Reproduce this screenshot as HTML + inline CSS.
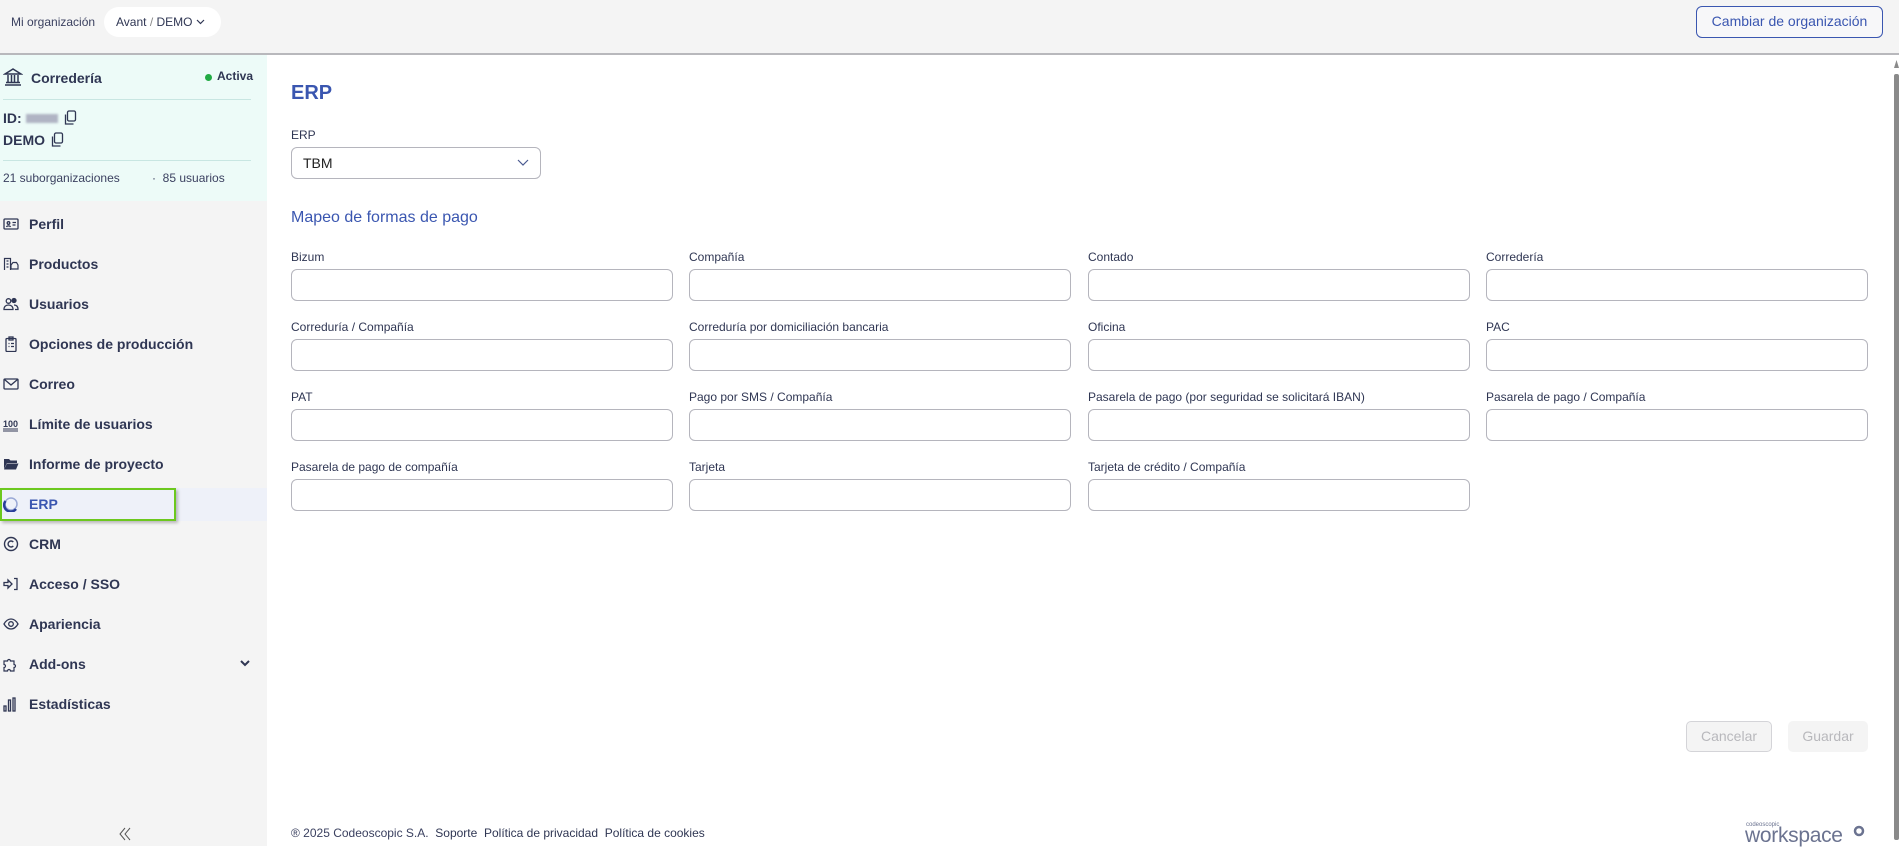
<!DOCTYPE html>
<html><head><meta charset="utf-8"><style>
*{box-sizing:border-box;margin:0;padding:0}
body{width:1899px;height:846px;overflow:hidden;font-family:"Liberation Sans",Arial,sans-serif;color:#2f3653;background:#fff;position:relative}
.hdr{position:absolute;left:0;top:0;width:1899px;height:55px;background:#f4f4f4;border-bottom:2px solid #b8b8bc}
.abs{position:absolute}
.side{position:absolute;left:0;top:55px;width:267px;height:791px;background:#f4f4f4}
.info{position:absolute;left:0;top:0;width:267px;height:146px;background:#edfbf8}
.nav{position:absolute;left:0;width:267px;height:32px;font-size:14px;font-weight:bold;line-height:32px;padding-left:29px}
.nav svg{position:absolute;left:3px;top:8px}
.lbl{position:absolute;font-size:12px;color:#2f3653}
.inp{position:absolute;width:382px;height:32px;border:1px solid #b5b5bd;border-radius:6px;background:#fff}
a{color:#2f3653}
</style></head><body>
<div class="hdr">
 <div class="abs" style="left:11px;top:15px;font-size:12px;color:#3b4160">Mi organización</div>
 <div class="abs" style="left:104px;top:7px;width:117px;height:30px;background:#fff;border-radius:15px;font-size:12px;line-height:30px;padding-left:12px">Avant <span style="color:#888">/</span> DEMO <svg width="9" height="6" viewBox="0 0 9 6" style="vertical-align:1px"><path d="M1 1l3.5 3.5L8 1" stroke="#2f3653" fill="none" stroke-width="1.2"/></svg></div>
 <div class="abs" style="left:1696px;top:6px;width:187px;height:32px;border:1.5px solid #3a56b0;border-radius:6px;background:#f7f7f9;color:#3a56b0;font-size:14px;line-height:29px;text-align:center">Cambiar de organización</div>
</div>
<div class="side">
 <div class="info">
  <svg class="abs" style="left:3px;top:12px" width="20" height="20" viewBox="0 0 20 20" fill="none" stroke="#2f3653" stroke-width="1.5"><path d="M2 7L10 2l8 5zM2 18h16M3 15.5h14M5 8v7M8.5 8v7M11.5 8v7M15 8v7"/></svg>
  <div class="abs" style="left:31px;top:15px;font-size:14px;font-weight:bold">Corredería</div>
  <div class="abs" style="left:205px;top:19px;width:7px;height:7px;border-radius:50%;background:#22aa44"></div>
  <div class="abs" style="left:217px;top:14px;font-size:12px;font-weight:bold">Activa</div>
  <div class="abs" style="left:3px;top:44px;width:248px;height:1px;background:#c8e6e2"></div>
  <div class="abs" style="left:3px;top:55px;font-size:14px;font-weight:bold">ID: <span style="display:inline-block;width:32px;height:9px;background:#b0b4c4;filter:blur(1px);vertical-align:0"></span></div>
  <svg class="abs" style="left:63px;top:55px" width="14" height="16" viewBox="0 0 14 16" fill="none" stroke="#2f3653" stroke-width="1.3"><rect x="4.5" y="1" width="8" height="10" rx="1.5"/><path d="M2.5 4.5v9.5h8"/></svg>
  <div class="abs" style="left:3px;top:77px;font-size:14px;font-weight:bold">DEMO</div>
  <svg class="abs" style="left:50px;top:77px" width="14" height="16" viewBox="0 0 14 16" fill="none" stroke="#2f3653" stroke-width="1.3"><rect x="4.5" y="1" width="8" height="10" rx="1.5"/><path d="M2.5 4.5v9.5h8"/></svg>
  <div class="abs" style="left:3px;top:105px;width:248px;height:1px;background:#c8e6e2"></div>
  <div class="abs" style="left:3px;top:116px;font-size:12px;color:#3b4160">21 suborganizaciones</div>
  <div class="abs" style="left:152px;top:116px;font-size:12px;color:#3b4160">· &nbsp;85 usuarios</div>
 </div>
</div>
<div class="nav" style="top:208px">Perfil<svg width="16" height="16" viewBox="0 0 16 16" fill="none" stroke="#2f3653" stroke-width="1.3"><rect x="1" y="3" width="14" height="10" rx="1"/><circle cx="5.5" cy="7" r="1.3"/><path d="M3.5 11c.5-1.5 3.5-1.5 4 0M9.5 6.5h3.5M9.5 9h3"/></svg></div>
<div class="nav" style="top:248px">Productos<svg width="16" height="16" viewBox="0 0 16 16" fill="none" stroke="#2f3653" stroke-width="1.2"><path d="M1.5 14V2.5h6V14M3.5 5h2M3.5 8h2M3.5 11h2M8 9l2-2.5h3.5L15 9v4H8z"/></svg></div>
<div class="nav" style="top:288px">Usuarios<svg width="16" height="16" viewBox="0 0 16 16" fill="none" stroke="#2f3653" stroke-width="1.3"><circle cx="5.5" cy="5" r="2.3"/><path d="M1 13.5c0-3 2-4.5 4.5-4.5s4.5 1.5 4.5 4.5z"/><circle cx="11" cy="4.5" r="2" fill="#2f3653"/><path d="M11 9c2 0 4 1 4 4.5h-3"/></svg></div>
<div class="nav" style="top:328px">Opciones de producción<svg width="16" height="16" viewBox="0 0 16 16" fill="none" stroke="#2f3653" stroke-width="1.3"><rect x="3" y="2.5" width="10" height="13" rx="1"/><rect x="6" y="1" width="4" height="3"/><path d="M5.5 7.5h1M8 7.5h3M5.5 10.5h1M8 10.5h3"/></svg></div>
<div class="nav" style="top:368px">Correo<svg width="16" height="16" viewBox="0 0 16 16" fill="none" stroke="#2f3653" stroke-width="1.3"><rect x="1" y="3" width="14" height="10" rx="1"/><path d="M1.5 3.5L8 9l6.5-5.5"/></svg></div>
<div class="nav" style="top:408px">Límite de usuarios<svg width="16" height="16" viewBox="0 0 16 16"><text x="0" y="11" font-size="9" font-weight="bold" fill="#2f3653" font-family="Liberation Sans">100</text><path d="M0 13h15M0 15h15" stroke="#2f3653" stroke-width="1"/></svg></div>
<div class="nav" style="top:448px">Informe de proyecto<svg width="16" height="16" viewBox="0 0 16 16"><path d="M1 3h5l1.5 1.5H14V7H4L1 13z" fill="#2f3653"/><path d="M4 7.5h11.5L13 13.5H1z" fill="#2f3653"/></svg></div>
<div class="abs" style="left:0;top:488px;width:267px;height:33px;background:#eef1f9"></div>
<div class="abs" style="left:0;top:488px;width:176px;height:33px;border:2px solid #6cc81e;box-shadow:2px 2px 3px rgba(0,0,0,.25)"></div>
<div class="nav" style="top:488px;color:#3a56b0">ERP<svg width="16" height="16" viewBox="0 0 16 16" fill="none"><circle cx="8" cy="8" r="6" stroke="#9aa9d6" stroke-width="1.5"/><path d="M2.5 5A6 6 0 0 0 13 13" stroke="#2a3f99" stroke-width="2.5"/></svg></div>
<div class="nav" style="top:528px">CRM<svg width="16" height="16" viewBox="0 0 16 16" fill="none" stroke="#2f3653" stroke-width="1.4"><circle cx="8" cy="8" r="6.5"/><path d="M10.3 6a3 3 0 1 0 0 4"/></svg></div>
<div class="nav" style="top:568px">Acceso / SSO<svg width="16" height="16" viewBox="0 0 16 16" fill="none" stroke="#2f3653" stroke-width="1.3"><path d="M1 6.5h4V4l4 4-4 4V9.5H1zM11 2.5h3v11h-3"/></svg></div>
<div class="nav" style="top:608px">Apariencia<svg width="16" height="16" viewBox="0 0 16 16" fill="none" stroke="#2f3653" stroke-width="1.3"><path d="M1 8c2-3.5 4.5-5 7-5s5 1.5 7 5c-2 3.5-4.5 5-7 5s-5-1.5-7-5z"/><circle cx="8" cy="8" r="2.3"/></svg></div>
<div class="nav" style="top:648px">Add-ons<svg width="16" height="16" viewBox="0 0 16 16" fill="none" stroke="#2f3653" stroke-width="1.2"><path d="M1 5h3.5a1.5 1.5 0 1 1 3 0H11v3.5a1.5 1.5 0 1 1 0 3V15H7.5a1.5 1.5 0 1 0-3 0H1v-3.5a1.5 1.5 0 1 0 0-3z"/></svg><svg style="left:240px;top:12px" width="10" height="7" viewBox="0 0 10 7"><path d="M1 1l4 4 4-4" stroke="#2f3653" stroke-width="2" fill="none"/></svg></div>
<div class="nav" style="top:688px">Estadísticas<svg width="16" height="16" viewBox="0 0 16 16" fill="none" stroke="#2f3653" stroke-width="1.3"><rect x="1" y="10" width="2" height="5"/><rect x="5.5" y="4" width="2" height="11"/><rect x="10" y="2" width="2" height="13"/></svg></div>
<svg class="abs" style="left:119px;top:827px" width="14" height="14" viewBox="0 0 14 14" fill="none" stroke="#555" stroke-width="1"><path d="M6 1L1 7l5 6M11 1L6 7l5 6"/></svg>

<div class="abs" style="left:291px;top:82px;font-size:20px;color:#3a56b0;font-weight:bold">ERP</div>
<div class="lbl" style="left:291px;top:128px">ERP</div>
<div class="abs" style="left:291px;top:147px;width:250px;height:32px;border:1px solid #b5b5bd;border-radius:6px;font-size:14px;line-height:30px;padding-left:11px;color:#222">TBM<svg class="abs" style="left:225px;top:11px" width="12" height="8" viewBox="0 0 12 8"><path d="M1 1l5 5 5-5" stroke="#4a5a90" stroke-width="1.2" fill="none"/></svg></div>
<div class="abs" style="left:291px;top:209px;font-size:16px;color:#3a56b0">Mapeo de formas de pago</div>

<div class="lbl" style="left:291px;top:250px">Bizum</div><div class="inp" style="left:291px;top:269px"></div>
<div class="lbl" style="left:689px;top:250px">Compañía</div><div class="inp" style="left:689px;top:269px"></div>
<div class="lbl" style="left:1088px;top:250px">Contado</div><div class="inp" style="left:1088px;top:269px"></div>
<div class="lbl" style="left:1486px;top:250px">Corredería</div><div class="inp" style="left:1486px;top:269px"></div>

<div class="lbl" style="left:291px;top:320px">Correduría / Compañía</div><div class="inp" style="left:291px;top:339px"></div>
<div class="lbl" style="left:689px;top:320px">Correduría por domiciliación bancaria</div><div class="inp" style="left:689px;top:339px"></div>
<div class="lbl" style="left:1088px;top:320px">Oficina</div><div class="inp" style="left:1088px;top:339px"></div>
<div class="lbl" style="left:1486px;top:320px">PAC</div><div class="inp" style="left:1486px;top:339px"></div>

<div class="lbl" style="left:291px;top:390px">PAT</div><div class="inp" style="left:291px;top:409px"></div>
<div class="lbl" style="left:689px;top:390px">Pago por SMS / Compañía</div><div class="inp" style="left:689px;top:409px"></div>
<div class="lbl" style="left:1088px;top:390px">Pasarela de pago (por seguridad se solicitará IBAN)</div><div class="inp" style="left:1088px;top:409px"></div>
<div class="lbl" style="left:1486px;top:390px">Pasarela de pago / Compañía</div><div class="inp" style="left:1486px;top:409px"></div>

<div class="lbl" style="left:291px;top:460px">Pasarela de pago de compañía</div><div class="inp" style="left:291px;top:479px"></div>
<div class="lbl" style="left:689px;top:460px">Tarjeta</div><div class="inp" style="left:689px;top:479px"></div>
<div class="lbl" style="left:1088px;top:460px">Tarjeta de crédito / Compañía</div><div class="inp" style="left:1088px;top:479px"></div>

<div class="abs" style="left:1686px;top:721px;width:86px;height:31px;border:1px solid #d4d4d8;border-radius:5px;background:#f4f4f4;color:#b8b8bc;font-size:14px;line-height:29px;text-align:center">Cancelar</div>
<div class="abs" style="left:1788px;top:721px;width:80px;height:31px;border-radius:5px;background:#f4f4f4;color:#b8b8bc;font-size:14px;line-height:31px;text-align:center">Guardar</div>

<div class="abs" style="left:291px;top:826px;font-size:12px;color:#3b4160">® 2025 Codeoscopic S.A. &nbsp;<a>Soporte</a>&nbsp; <a>Política de privacidad</a>&nbsp; <a>Política de cookies</a></div>
<div class="abs" style="left:1746px;top:822px;font-size:6px;color:#6b7390">codeoscopic</div>
<div class="abs" style="left:1745px;top:826px;font-size:21px;color:#6b7390;line-height:20px;letter-spacing:-0.3px">workspace</div>
<svg class="abs" style="left:1853px;top:825px" width="12" height="12" viewBox="0 0 12 12"><circle cx="6" cy="6" r="4" fill="none" stroke="#6b7390" stroke-width="2.5"/></svg>

<div class="abs" style="left:1894px;top:74px;width:5px;height:766px;background:#8a8a8a;border-radius:2px"></div>
<div class="abs" style="left:1894px;top:60px;width:5px;height:8px;background:#8a8a8a;clip-path:polygon(50% 0,100% 100%,0 100%)"></div>
</body></html>
